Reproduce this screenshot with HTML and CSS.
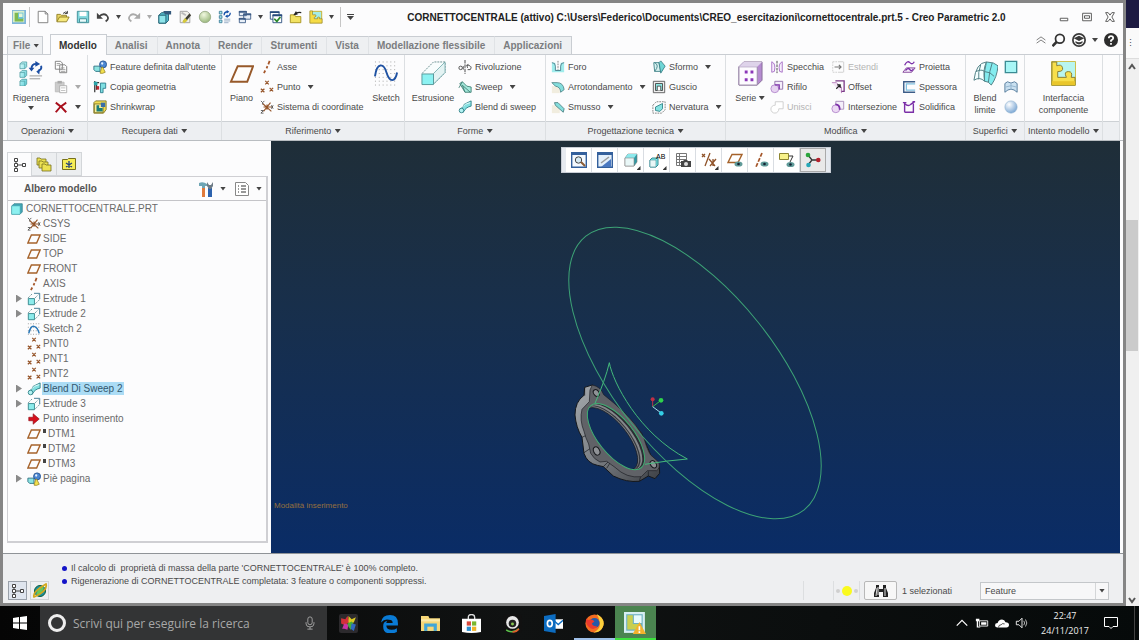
FILE: index.html
```html
<!DOCTYPE html>
<html lang="it">
<head>
  <meta charset="utf-8">
  <title>Creo Parametric 2.0</title>
  <link rel="stylesheet" href="styles.css">
</head>
<body>
  <!-- icon sprite -->
  <svg class="sprite" aria-hidden="true">
    <defs>
      <linearGradient id="cyan" x1="0" y1="0" x2="1" y2="1"><stop offset="0" stop-color="#d8fbfb"/><stop offset="1" stop-color="#62d3dc"/></linearGradient>
      <linearGradient id="metal" x1="0" y1="0" x2="1" y2="1"><stop offset="0" stop-color="#a4a8ac"/><stop offset=".5" stop-color="#7c8085"/><stop offset="1" stop-color="#3c3f44"/></linearGradient>
      <radialGradient id="ball" cx=".35" cy=".3" r=".8"><stop offset="0" stop-color="#fff"/><stop offset="1" stop-color="#6f9fd0"/></radialGradient>
      <radialGradient id="greenball" cx=".4" cy=".3" r=".8"><stop offset="0" stop-color="#f1f8e0"/><stop offset="1" stop-color="#8fb070"/></radialGradient>
    </defs>
    <symbol id="i-app" viewBox="0 0 16 16"><path d="M0 0h16v16H0z" fill="#7fb6d8"/><path d="M1 1h13v13H1z" fill="#d9efcc"/><path d="M3 3v10h10V9H8V3z" fill="#7fb94f"/><path d="M7 3h6v7H7z" fill="#6cc3dc"/><path d="M8 4h4v4H8z" fill="#e6f6d8"/></symbol>
    <symbol id="i-new" viewBox="0 0 16 16"><path d="M2.500 1.500h8l3 3v10h-11z" fill="#fff" stroke="#777"/><path d="M10.500 1.500v3h3" fill="none" stroke="#777"/></symbol>
    <symbol id="i-open" viewBox="0 0 16 16"><path d="M1 13V5h4l1 1h6v2" fill="#e9d568" stroke="#8d7a1e"/><path d="M1 13.500 4 8h11l-3 5.500z" fill="#f6e87c" stroke="#8d7a1e"/><path d="M8 4q3-3 5-1m0-2v3h-3" fill="none" stroke="#333"/></symbol>
    <symbol id="i-save" viewBox="0 0 16 16"><path d="M1.500 1.500h13v13h-13z" fill="#7fd6dc" stroke="#3b8a94"/><path d="M4 2h8v5H4z" fill="#fff"/><path d="M4 10h8v4H4z" fill="#e9fbfb" stroke="#3b8a94"/></symbol>
    <symbol id="i-undo" viewBox="0 0 16 16"><path d="M3 8q5-5 9-2 4 4-1 7" fill="none" stroke="#444" stroke-width="2"/><path d="M1 3v7h7z" fill="#444"/></symbol>
    <symbol id="i-redo" viewBox="0 0 16 16"><path d="M13 8q-5-5-9-2-4 4 1 7" fill="none" stroke="#aaa" stroke-width="2"/><path d="M15 3v7H8z" fill="#aaa"/></symbol>
    <symbol id="i-regen3d" viewBox="0 0 16 16"><path d="M1 6 4 3h8v9l-3 3H1z" fill="#51b4c6" stroke="#1f5e70"/><path d="M1 6h8v9H1z" fill="#8ee4ea" stroke="#1f5e70"/><path d="M6 1h9v4H8z" fill="#34597c"/></symbol>
    <symbol id="i-edit" viewBox="0 0 16 16"><path d="M2.500 1.500h8l3 3v10h-11z" fill="#f2f2ec" stroke="#999"/><path d="m4 3 5 3" stroke="#bbb" stroke-width="2"/><path d="m6 12 7-8 2 2-6 7z" fill="#3f3f33"/><path d="m5 13 3-4 3 3-4 3z" fill="#d5c93c"/></symbol>
    <symbol id="i-ball" viewBox="0 0 16 16"><circle cx="8" cy="8" r="6.500" fill="url(#greenball)" stroke="#9aab88"/></symbol>
    <symbol id="i-list-regen" viewBox="0 0 16 16"><path d="M1.500 1.500h3v3h-3zm0 5h3v3h-3zm0 5h3v3h-3z" fill="#a9e9ee" stroke="#3b7c98"/><path d="M7 10.500h7m-7 2h7m-7 2h5" stroke="#8fa7c0"/><path d="M7 6q0-4 4-4m3 1q0 4-4 4" fill="none" stroke="#1650a8" stroke-width="1.500"/><path d="m10 0 3 2-3 2zm1 5-3 2 3 2z" fill="#1650a8"/></symbol>
    <symbol id="i-windows" viewBox="0 0 16 16"><path d="M1.500 1.500h8v5h-8zM6.500 4.500h8v6h-8zM1.500 9.500h7v5h-7z" fill="#e9f0f8" stroke="#3d5c87"/><path d="M6 5h9M1 10h7M1 2h9" stroke="#3d5c87" stroke-width="2"/></symbol>
    <symbol id="i-check" viewBox="0 0 16 16"><path d="M1.500 2.500h10v8h-10z" fill="#fff" stroke="#264a7c"/><path d="M4.500 5.500h10v9h-10z" fill="#fff" stroke="#264a7c"/><path d="M1 2.500h11M4 6h11" stroke="#264a7c" stroke-width="2"/><path d="m6 10 3 3 4-5" fill="none" stroke="#2b8a2b" stroke-width="2"/></symbol>
    <symbol id="i-folder-up" viewBox="0 0 16 16"><path d="M1.500 5.500h5l1 2h6v7h-12z" fill="#f2e262" stroke="#a38f1c"/><path d="M7 5q2-3 7-2" fill="none" stroke="#222" stroke-width="1.500"/><path d="m8 1-3 5 5-1z" fill="#222"/></symbol>
    <symbol id="i-puzzle" viewBox="0 0 16 16"><path d="M1.500 1.500h13v13h-13z" fill="#a5ece6" stroke="#c8a818"/><path d="M1 1h3v4q0 1 1.500.500T8 6 6 8.500V10h4q-1-2 1-2t1 2h3v5H1z" fill="#f6dc45" stroke="#8b7a24" stroke-width=".7"/></symbol>
    <symbol id="i-regen" viewBox="0 0 26 26"><g fill="url(#cyan)" stroke="#4b9aa0" stroke-width=".8"><path d="M1 3 3 1h5v5l-2 2H1zM1 12l2-2h5v5l-2 2H1zM1 21l2-2h5v5l-2 2H1z"/></g><path d="M1 3h5v5M1 12h5v5M1 21h5v5" fill="none" stroke="#4b9aa0" stroke-width=".7"/><path d="M11 15.500h13m-13 3h11" stroke="#999"/><path d="M13 8q0-5 5-5m5 2q1 4-3 5" fill="none" stroke="#1c4ea3" stroke-width="2"/><path d="m17 0 5 3-5 3zm5 8-4 3 3 3zM10 7h6l-3 4z" fill="#1c4ea3"/></symbol>
    <symbol id="i-copy" viewBox="0 0 16 16"><path d="M1.500 1.500h6l2 2v7h-8zM6.500 5.500h6l2 2v7h-8z" fill="#fff" stroke="#777"/><path d="M3 4h4m-4 2h3m2 3h4m-4 2h5m-5 2h5" stroke="#999"/></symbol>
    <symbol id="i-paste" viewBox="0 0 16 16"><path d="M1.500 2.500h10v11h-10z" fill="#ccc" stroke="#bbb"/><path d="M4 1h5v3H4z" fill="#aaa"/><path d="M6.500 6.500h8v8h-8z" fill="#fff" stroke="#aaa"/><path d="M8 9h5m-5 3h5" stroke="#bbb"/></symbol>
    <symbol id="i-delete" viewBox="0 0 16 16"><path d="M2 3q6 4 12 11M14 3Q7 7 2 14" fill="none" stroke="#a80f1c" stroke-width="2.200"/></symbol>
    <symbol id="i-udf" viewBox="0 0 16 16"><path d="M1 7h7v6H3L1 11z" fill="#8ce4e2" stroke="#2a6e80"/><circle cx="11.500" cy="5" r="4" fill="#4b86d2" stroke="#22518f"/><circle cx="10.500" cy="4" r="1.300" fill="#e7f2ff"/><path d="M8 15 10 8h1l3 6q-3 2-6 1z" fill="#f3e04c" stroke="#8d7a1e" stroke-width=".8"/></symbol>
    <symbol id="i-copygeo" viewBox="0 0 16 16"><path d="M2 1v13M1 3h6M4 4v7" stroke="#333" stroke-width="1.400"/><path d="M1 2h4v4H1z" fill="#2aa3a8"/><path d="M4 7h3v4H4z" fill="#c2262e"/><path d="M8.500 3.500h6v6h-3v5h-3z" fill="#7fdfe2" stroke="#2a7c8d"/></symbol>
    <symbol id="i-shrink" viewBox="0 0 16 16"><path d="M1 3 3 1h12v10l-3 4H1z" fill="#f1dd52" stroke="#7f7326"/><path d="M1.500 4.500h10v10h-10z" fill="#f8ef9a" stroke="#7f7326"/><path d="M4 6h3v3h4v4H4z" fill="#1b7c78"/><path d="M9 3h5v5H9z" fill="#3a6ea8"/></symbol>
    <symbol id="i-plane" viewBox="0 0 16 16"><path d="M5 3.500h10L11 12.500H1z" fill="none" stroke="#a5622a" stroke-width="1.600"/></symbol>
    <symbol id="i-plane-lg" viewBox="0 0 26 26"><path d="M9 5.500h16l-6 16H2z" fill="#fffdfb" stroke="#97592a" stroke-width="2"/></symbol>
    <symbol id="i-axis" viewBox="0 0 16 16"><path d="M11 1 9.500 5M8.500 7l-1 2.500M6 12l-1.500 3" stroke="#a5562a" stroke-width="2"/></symbol>
    <symbol id="i-point" viewBox="0 0 16 16"><path d="m6 1 4 4m0-4L6 5M1 10l4 4m0-4-4 4M11 9l4 4m0-4-4 4" stroke="#96552a" stroke-width="1.400"/></symbol>
    <symbol id="i-csys" viewBox="0 0 16 16"><path d="m3 4 10 9M12 3 4 13M4 8h10M8 5v6" stroke="#96552a" stroke-width="1.300"/><path d="m1 1 2 2 2-2M3 3v2M1 12h3l-3 3h3M13 6l2 4m0-4-2 4" fill="none" stroke="#555"/></symbol>
    <symbol id="i-sketch" viewBox="0 0 26 26"><path d="M1 1h24M1 5h24M1 9h24M1 13h24M1 17h24M1 21h24M1 25h24" stroke="#a4a4a4" stroke-dasharray="1 3"/><path d="M1 16C3 1 10 2 13 12s9 11 11 0" fill="none" stroke="#1f52a3" stroke-width="2"/></symbol>
    <symbol id="i-sketch-sm" viewBox="0 0 16 16"><path d="M1 2h14M1 6h14M1 10h14M1 14h14" stroke="#888" stroke-dasharray="1 2"/><path d="M2 13Q4 4 8 5t6 8" fill="none" stroke="#2a78b8" stroke-width="1.700"/></symbol>
    <symbol id="i-extrude-lg" viewBox="0 0 26 26"><path d="m1 13 12-12h12v11L13 24" fill="#f8fdfd" stroke="#6a8f90" stroke-dasharray="2 1"/><path d="M13 13 25 1v11L13 24z" fill="#e4f3f3" stroke="#57989a" stroke-width=".7"/><path d="M1 13.500h12v11H1z" fill="#8cf2f2" stroke="#57989a"/></symbol>
    <symbol id="i-extrude" viewBox="0 0 16 16"><path d="M1.500 7.500h7v7h-7z" fill="#8cecec" stroke="#2f8288"/><path d="M1 7 6 2m3 5 4-4M9 14l6-6" stroke="#4f7f84" stroke-dasharray="1.500 1"/><path d="M8 1.500h6.500V8" fill="none" stroke="#2f6f88"/></symbol>
    <symbol id="i-revolve" viewBox="0 0 16 16"><path d="M8 0v16" stroke="#333" stroke-dasharray="4 1"/><circle cx="3" cy="9" r="2" fill="none" stroke="#444"/><path d="M10 6q5 0 5 3t-4 2M12 5l-2 1 1 3M6 7v4" fill="none" stroke="#444"/></symbol>
    <symbol id="i-sweep" viewBox="0 0 16 16"><path d="m2 4 3-2 5 5 5 1v6H8z" fill="#a4e9dc" stroke="#3f7f74"/><path d="M1 9 5 2m0 4 3 8M5 6l9 8" fill="none" stroke="#3f7f74"/></symbol>
    <symbol id="i-blend" viewBox="0 0 16 16"><path d="M3 10q3-1 4-5l8-4v6q-6 1-9 7z" fill="#84dfe0" stroke="#2b7f86"/><path d="M5 8q3-4 9-5" fill="none" stroke="#eaffff"/><circle cx="4" cy="12" r="2.600" fill="#b4f3f3" stroke="#2b7f86"/></symbol>
    <symbol id="i-hole" viewBox="0 0 16 16"><path d="M1 3h4v8h6V3h4v11H1z" fill="#a0ecec"/><path d="M1 3q4 0 4 4v5h6V7q0-4 4-4" fill="none" stroke="#467c88"/><path d="M8 1v10" stroke="#777" stroke-dasharray="2 1"/></symbol>
    <symbol id="i-round" viewBox="0 0 16 16"><path d="M1 7h9v8H1z" fill="#f1eddf"/><path d="M1 3h6q7 0 8 8l-4 3q0-6-6-7z" fill="#84dedd" stroke="#54898c"/></symbol>
    <symbol id="i-chamfer" viewBox="0 0 16 16"><path d="M1 6h9v9H1z" fill="#f1eddf"/><path d="M4 3h4l7 7-1 4-9-8z" fill="#84dedd" stroke="#4d8184"/></symbol>
    <symbol id="i-draft" viewBox="0 0 16 16"><path d="M2 3h6l2 10H3z" fill="#d8f2f0" stroke="#3b7f86"/><path d="m8 3 2-2 5 6-5 8z" fill="#6fd6d6" stroke="#3b7f86"/><path d="M3 3q6 3 0 10" fill="none" stroke="#3b7f86"/></symbol>
    <symbol id="i-shell" viewBox="0 0 16 16"><path d="M1.500 1.500h13v13h-13z" fill="#eee" stroke="#555"/><path d="M4 4h8v8H4z" fill="#8ee7e3" stroke="#444"/><path d="M6 12V7h4v5" fill="#fff" stroke="#444"/></symbol>
    <symbol id="i-rib" viewBox="0 0 16 16"><path d="m1 6 4-4h10v9l-4 4H1z" fill="none" stroke="#777" stroke-dasharray="2 1"/><path d="M4 12V8l8-4v6l-3 3z" fill="#86e2e2" stroke="#2f8288"/></symbol>
    <symbol id="i-pattern" viewBox="0 0 26 26"><path d="m1 6 5-5h19v19l-5 5H1z" fill="#b58bd0" stroke="#866d98"/><path d="M1 6h19v19H1z" fill="#fdfbff" stroke="#9a88a8"/><path d="m1 6 5-5h19l-5 5z" fill="#ded3ea"/><path d="M7 10h3v3H7zm6 0h3v3h-3zm-6 8h3v3H7zm6 0h3v3h-3z" fill="#8b36b8"/></symbol>
    <symbol id="i-mirror" viewBox="0 0 16 16"><path d="M8 1v14" stroke="#333" stroke-dasharray="3 1"/><path d="M2 2q5 2 3 11l-3 1zM14 2q-5 2-3 11l3 1z" fill="#f6effb" stroke="#a268c4"/></symbol>
    <symbol id="i-trim" viewBox="0 0 16 16"><path d="M5.500 1.500h9v9h-9z" fill="#f4eefa" stroke="#8d6ba6"/><circle cx="5.500" cy="10" r="4.500" fill="#e6d2f1" stroke="#b287cc"/><path d="M5.500 5.500h5v5" fill="none" stroke="#7b2fa8" stroke-width="1.500"/></symbol>
    <symbol id="i-merge" viewBox="0 0 16 16"><path d="M6 6V2h9v8h-5a4.500 4.500 0 1 1-4-4z" fill="#fff" stroke="#ccc"/></symbol>
    <symbol id="i-extend" viewBox="0 0 16 16"><path d="M2 2h6M2 2v12h6" fill="none" stroke="#ccc" stroke-dasharray="2 1"/><path d="M14.500 2v12M8 2h6M8 14h6" stroke="#ccc"/><path d="M4 8h7M9 5.500 11.500 8 9 10.500" fill="none" stroke="#777" stroke-width="1.300"/></symbol>
    <symbol id="i-offset" viewBox="0 0 16 16"><path d="M1 3h5l6 5v7" fill="#f3e5f5" stroke="#b97fbd"/><path d="M5 1h10v12h-3" fill="none" stroke="#7c3a88" stroke-width="1.500"/><path d="m6 10 4-4M7 5.500h3.500V9" fill="none" stroke="#222" stroke-width="1.300"/></symbol>
    <symbol id="i-intersect" viewBox="0 0 16 16"><path d="M5.500 1.500h9v9h-9z" fill="#f4eefa" stroke="#a58cb8"/><circle cx="5.500" cy="10" r="4.500" fill="#ecd9f4" stroke="#b287cc"/><path d="M5 5q5 0 5 6" fill="none" stroke="#7b2fa8" stroke-width="2"/></symbol>
    <symbol id="i-project" viewBox="0 0 16 16"><path d="m1 14 4-5h10l-4 5z" fill="#f7edfb" stroke="#7c3a94"/><path d="M3 6q3-6 6-3t5-1M4 12q3-4 5-1t4-1" fill="none" stroke="#7b2fa8" stroke-width="1.500"/></symbol>
    <symbol id="i-thicken" viewBox="0 0 16 16"><path d="M15 2H2v12h13" fill="none" stroke="#3b5c88" stroke-width="1.600"/><path d="M15 4.500H5v7h10" fill="none" stroke="#7fc0e0" stroke-width="1.400"/></symbol>
    <symbol id="i-solidify" viewBox="0 0 16 16"><path d="M3 14V4q4 4 7 1l4-3M3 14h10V4" fill="none" stroke="#7b2fa8" stroke-width="1.600"/><path d="M1 3h4m7-1h3" stroke="#7b2fa8" stroke-width="1.500"/></symbol>
    <symbol id="i-boundary" viewBox="0 0 26 26"><path d="M1 20Q3 2 14 1q-4 8-2 20-5-5-11-1z" fill="#f4ffff" stroke="#4f7f84"/><path d="M14 1q8 0 12 4-1 12-7 20-3-4-7-4-1-10 2-20z" fill="#84ecef" stroke="#4f7f84"/><path d="M3 11q6-3 9 0 6 0 10 5M20 2q-3 8-4 20M8 4q-3 8-2 15" fill="none" stroke="#4f7f84"/></symbol>
    <symbol id="i-fill" viewBox="0 0 16 16"><path d="M1.500 1.500h13v13h-13z" fill="#a8f6f6" stroke="#3b8b94" stroke-width="1.500"/></symbol>
    <symbol id="i-style" viewBox="0 0 16 16"><path d="M1 14V4l3-2q4 3 8 0l3 2v10q-7-7-14 0z" fill="#c9e0f0" stroke="#4b7396"/><path d="M2 8q6-3 12 0M8 3v8" fill="none" stroke="#8eb0cc"/></symbol>
    <symbol id="i-sphere" viewBox="0 0 16 16"><circle cx="8" cy="8" r="7" fill="url(#ball)" stroke="#8eb0d0" stroke-width=".7"/></symbol>
    <symbol id="i-puzzle-lg" viewBox="0 0 26 26"><path d="M.5.500h25v25H.500z" fill="#b8f5ef" stroke="#cdbb45"/><path d="M1 1h5v4q5-2 6 2t-5 4v6h9q-3-6 2-6t3 6h4v8H1z" fill="#f7df4c" stroke="#857c35"/><path d="M1 21h24v4H1z" fill="#e9c62b"/></symbol>
    <symbol id="i-tree" viewBox="0 0 16 16"><path d="M2.500 1.500h3v3h-3zM2.500 6.500h3v3h-3zM2.500 11.500h3v3h-3zM10.500 6.500h3v3h-3z" fill="#fff" stroke="#444"/><path d="M4 4.500v2m0 3v2M5.500 8h5" stroke="#444"/></symbol>
    <symbol id="i-folders" viewBox="0 0 16 16"><g fill="#ece152" stroke="#77701e" stroke-width=".8"><path d="M1 2h3l1 1h5v6H1z"/><path d="M3 5h3l1 1h5v6H3z"/><path d="M6 8h3l1 1h5v6H6z"/></g></symbol>
    <symbol id="i-favorites" viewBox="0 0 16 16"><path d="M1.500 3.500h5l1-1h7v11h-13z" fill="#f5ed55" stroke="#77701e"/><path d="M8 5v7M5 7l6 4m0-4-6 4" stroke="#26427c" stroke-width="1.300"/></symbol>
    <symbol id="i-tools" viewBox="0 0 16 16"><path d="M1 2q4-2 8 1v2H7v3H4V5L1 5z" fill="#6fa6b5"/><path d="M4 7h3v9H4z" fill="#e07a3b"/><path d="M10 7h4v9h-4z" fill="#2d62ad"/><path d="M9 1v4l2 3h2l2-3V1l-2 3h-2z" fill="#6d7b86"/></symbol>
    <symbol id="i-settings" viewBox="0 0 16 16"><path d="M1.500 1.500h10l3 3v10h-13z" fill="#fff" stroke="#888"/><path d="M4 5h1m2 0h5M4 8h1m2 0h5m-8 3h1m2 0h5" stroke="#777" stroke-width="1.300"/></symbol>
    <symbol id="i-part" viewBox="0 0 16 16"><path d="m1 4 3-3h11v11l-3 3H1z" fill="#45a9b8" stroke="#2f7f8c"/><path d="M1 4h11v11H1z" fill="#8cf0f0" stroke="#4fb0b8" stroke-width=".6"/></symbol>
    <symbol id="i-shaded" viewBox="0 0 16 16"><path d="m2 6 3-4h9v8l-3 4H2z" fill="#2f9aa4" stroke="#777" stroke-width=".6"/><path d="m2 6 3-4h9l-3 4z" fill="#8ee9ec"/><path d="M2 6h9v8H2z" fill="#e9f7f7" stroke="#888" stroke-width=".6"/></symbol>
    <symbol id="i-insert" viewBox="0 0 16 16"><path d="M2 6h5V2l7 6-7 6v-4H2z" fill="#d6101c" stroke="#8a0b14" stroke-width=".7"/></symbol>
    <symbol id="i-refit" viewBox="0 0 16 16"><path d="M.7.700h14.600v14.600H.700z" fill="#f5faff" stroke="#34609c" stroke-width="1.400"/><path d="M0 2h16" stroke="#34609c" stroke-width="2"/><circle cx="7.500" cy="8" r="3.200" fill="#d9ecf5" stroke="#444"/><path d="m10 10 4 4" stroke="#8d5c34" stroke-width="2"/></symbol>
    <symbol id="i-repaint" viewBox="0 0 16 16"><path d="M.7.700h14.600v14.600H.700z" fill="#e3effb" stroke="#34609c" stroke-width="1.400"/><path d="M0 2h16" stroke="#34609c" stroke-width="2"/><path d="M14 15H4l10-8z" fill="#4a78c0"/><path d="m4 11 8-6" stroke="#9a9a9a" stroke-width="1.500"/></symbol>
    <symbol id="i-camera" viewBox="0 0 16 16"><path d="M1.500 1.500h10v12h-10zM1 4.500h10M1 7.500h10M1 10.500h10M4.500 2v12" fill="#fff" stroke="#777"/><path d="M6 9h2l1-1h3l1 1h3v6H6z" fill="#444"/><circle cx="11" cy="12" r="2" fill="#ddd"/></symbol>
    <symbol id="i-datum" viewBox="0 0 16 16"><path d="M9 1 4 14M1 2l3 3m0-3L1 5M8 7l6 7m1-7-6 7M12 7v7" stroke="#8f5228" stroke-width="1.300"/></symbol>
    <symbol id="i-plane-eye" viewBox="0 0 16 16"><path d="M5 2.500h10l-4 8H1z" fill="none" stroke="#a5622a" stroke-width="1.400"/><ellipse cx="11.500" cy="12" rx="4" ry="2.600" fill="#5f9a98"/><circle cx="11.500" cy="12" r="1.300" fill="#123"/></symbol>
    <symbol id="i-axis-eye" viewBox="0 0 16 16"><path d="M9 1 3 15" stroke="#a5562a" stroke-width="1.700" stroke-dasharray="4 1.500"/><ellipse cx="11.500" cy="12" rx="4" ry="2.600" fill="#5f9a98"/><circle cx="11.500" cy="12" r="1.300" fill="#123"/></symbol>
    <symbol id="i-note-eye" viewBox="0 0 16 16"><path d="M.5 1.500h9v6h-9z" fill="#f8f28a" stroke="#8d8530"/><path d="M10 4h4l-3 6" fill="none" stroke="#333"/><ellipse cx="11.500" cy="12.500" rx="4" ry="2.600" fill="#5f9a98"/><circle cx="11.500" cy="12.500" r="1.300" fill="#123"/></symbol>
    <symbol id="i-spin" viewBox="0 0 16 16"><path d="m3 3 4 5-4 5m4-5h6" fill="none" stroke="#333" stroke-width="1.300"/><circle cx="3" cy="3" r="2.300" fill="#2ba53d"/><circle cx="13.300" cy="8" r="2.300" fill="#b3202c"/><circle cx="3.500" cy="13" r="2.300" fill="#27a8b8"/></symbol>
    <symbol id="i-up" viewBox="0 0 16 16"><path d="m1 8 7-5 7 5M1 13l7-5 7 5" fill="none" stroke="#777" stroke-width="1.500"/></symbol>
    <symbol id="i-search" viewBox="0 0 16 16"><circle cx="9" cy="6.500" r="5" fill="none" stroke="#333" stroke-width="2"/><path d="m5.500 10-5 5" stroke="#333" stroke-width="3"/></symbol>
    <symbol id="i-learn" viewBox="0 0 16 16"><circle cx="8" cy="8" r="7" fill="#fff" stroke="#3a3a3a" stroke-width="2"/><path d="m2 6 6-3 6 3-6 3zM4 9q4 3 8 0v2q-4 4-8 0z" fill="#3a3a3a"/></symbol>
    <symbol id="i-help" viewBox="0 0 16 16"><circle cx="8" cy="8" r="8" fill="#2d2d2d"/><path d="M5.500 6q0-2.500 2.500-2.500T10.500 6Q10.500 7 8 8.500V10M8 11.300v2" fill="none" stroke="#fff" stroke-width="2"/></symbol>
    <symbol id="i-min" viewBox="0 0 16 16"><path d="M2 10h12v4H2z" fill="#fff" stroke="#555" stroke-width="1.500"/></symbol>
    <symbol id="i-max" viewBox="0 0 16 16"><path d="M1 2h14v12H1zM4 6h8v4H4z" fill="#fff" stroke="#555" stroke-width="1.500"/></symbol>
    <symbol id="i-close" viewBox="0 0 16 16"><path d="M1 1h4l3 4 3-4h4l-4 7 4 7h-4l-3-4-3 4H1l4-7z" fill="#fff" stroke="#555" stroke-width="1.500"/></symbol>
    <symbol id="i-browser" viewBox="0 0 16 16"><circle cx="8" cy="8" r="5.500" fill="#1d8f9e" stroke="#0c5d3d"/><path d="M4 13q1-8 8-10-1 8-8 10z" fill="#68c65a"/><path d="M2 14Q0 9 14 1q2 7-12 13z" fill="none" stroke="#d3a71c" stroke-width="1.700"/></symbol>
    <symbol id="i-find" viewBox="0 0 16 16"><path d="M3 5V2h3v4h4V2h3v3l2 5v4h-5V9H6v5H1v-4z" fill="#222"/><path d="M4 5 3 13m9-8v8M5 4v8" stroke="#ddd"/></symbol>
    <symbol id="i-win" viewBox="0 0 16 16"><path d="m1 3 6-1v5.500H1zm7-1 7-1v6.500H8zM1 8.500h6V14l-6-1zm7 0h7V15l-7-1z" fill="#fff"/></symbol>
    <symbol id="i-mic" viewBox="0 0 16 16"><rect x="5.500" y="1" width="5" height="9" rx="2.500" fill="none" stroke="#aaa"/><path d="M3.500 7v2q0 3.500 4.500 3.500T12.500 9V7M8 12.500V15M5 15h6" fill="none" stroke="#aaa"/></symbol>
    <symbol id="i-splash" viewBox="0 0 18 18"><rect width="18" height="18" rx="2" fill="#2c2a2d"/><path d="m2 4 4 1 2-3 2 5-4 4-4-2z" fill="#d3303a"/><path d="m9 2 3 3 4-2-2 5-5 1z" fill="#d9c722"/><path d="m3 14 2-5 4 1-1 5-3-1z" fill="#c934a5"/><path d="m8 9 4-2 3 4-4 4-2-3z" fill="#46ad3a"/><path d="m12 9 4 1-2 6-3-2z" fill="#3267c0"/></symbol>
    <symbol id="i-edge" viewBox="0 0 18 18"><path d="M1 8Q2 1 9.500 1 17 1 17 9v2H6q0 4 5 4 3 0 5-1.500v3.500q-3 1.500-6 1.500-7 0-7-7 0-4 4-5-1 1-1 2h6q0-3-3.500-3Q4 4.500 1 8z" fill="#0a7bd6"/></symbol>
    <symbol id="i-explorer" viewBox="0 0 18 18"><path d="M0 2h7l1 2h10v12H0z" fill="#f7d778"/><path d="M3 9h12v7H3z" fill="#41a6d8"/><path d="M6 16v-4h6v4z" fill="#f7d778"/><path d="M0 5h18v2H0z" fill="#fbe9a8"/></symbol>
    <symbol id="i-store" viewBox="0 0 18 18"><path d="M6 5V3q0-2.500 3-2.500T12 3v2" fill="none" stroke="#ddd" stroke-width="1.300"/><path d="M0 4.500h18V17q-9 2-18 0z" fill="#fff"/><path d="M4.500 7h4v4h-4z" fill="#d8493c"/><path d="M9.500 7h4v4h-4z" fill="#7ab62d"/><path d="M4.500 12h4v4h-4z" fill="#2a8fd0"/><path d="M9.500 12h4v4h-4z" fill="#f0b429"/></symbol>
    <symbol id="i-webcam" viewBox="0 0 18 18"><rect width="18" height="18" rx="3" fill="#111"/><path d="M3 15q6 4 12-1" fill="none" stroke="#5ac24a" stroke-width="1.500"/><path d="M9 17q4 0 6-3" fill="none" stroke="#e05a2a" stroke-width="1.500"/><circle cx="9" cy="8" r="6" fill="#e8e8e8"/><circle cx="9" cy="9" r="3.600" fill="#222"/><circle cx="9" cy="9.500" r="1.400" fill="#84c44f"/></symbol>
    <symbol id="i-outlook" viewBox="0 0 18 18"><path d="M9 5h9v9H9z" fill="#fff"/><path d="m9 6 4.500 4L18 6" fill="none" stroke="#0c6cc0" stroke-width="1.300"/><path d="m0 2 11-2v18L0 16z" fill="#0c6cc0"/><ellipse cx="5.500" cy="9" rx="2.300" ry="3" fill="none" stroke="#fff" stroke-width="1.600"/></symbol>
    <symbol id="i-firefox" viewBox="0 0 18 18"><circle cx="9" cy="9" r="8.600" fill="#f36c21"/><path d="M11 0q8 4 6.500 11Q15 18 8 17.600 15 14 14 8 13 3 11 0z" fill="#fbd03c"/><circle cx="9" cy="8.500" r="4.800" fill="#2559a8"/><path d="M1 4q1 2 3 1.500 3-1 5 1.500L6.500 9q1 3 5 2.500-2 4-6.500 2Q0 10 1 4z" fill="#ea3a2e"/></symbol>
    <symbol id="i-creo" viewBox="0 0 20 20"><path d="M0 0h19v19H0z" fill="#d7eef2"/><path d="M2 2h15v15H2z" fill="#6db0c0"/><path d="M3 3v13h12v-5H8V3z" fill="#c9cf50"/><path d="M9 3h7v7H9z" fill="#e8fafc"/><path d="m14 9 6 11H8z" fill="#f3b22c"/><path d="M14 13v3.500m0 1v1.500" stroke="#fff" stroke-width="1.500"/></symbol>
    <symbol id="i-tray-up" viewBox="0 0 16 16"><path d="m2 11 6-6 6 6" fill="none" stroke="#fff" stroke-width="1.400"/></symbol>
    <symbol id="i-battery" viewBox="0 0 16 16"><path d="M5 5.500h9.500v6H5z" fill="none" stroke="#fff"/><path d="M7 7h6v3H7zM1 3h4v3H1zm1 3h1.500v6H6v1H2z" fill="#fff"/></symbol>
    <symbol id="i-cloud" viewBox="0 0 16 16"><path d="M3 13q-3 0-3-2.500T3 8q1-4 5-4 3 0 4 3 4 0 4 3t-3 3z" fill="#fff"/><path d="M4 13q0-3 3-3 1-2 4-1" fill="none" stroke="#111" stroke-width=".8"/></symbol>
    <symbol id="i-volume" viewBox="0 0 16 16"><path d="M1.500 6h3L8 2.500v11L4.500 10h-3z" fill="none" stroke="#fff"/><path d="M10 5.500q2 2.500 0 5M12 4q3 4 0 8" fill="none" stroke="#ccc"/></symbol>
    <symbol id="i-action" viewBox="0 0 16 16"><path d="M1.500 2.500h13v9H10l-2 2-2-2H1.500z" fill="none" stroke="#fff"/></symbol>
  </svg>

  <div class="desktop">
    <main class="window">
      <header class="titlebar">
        <div class="quick-access">
          <svg class="icon app-icon"><use href="#i-app"/></svg>
          <span class="separator"></span>
          <button title="Nuovo"><svg class="icon"><use href="#i-new"/></svg></button>
          <button title="Apri"><svg class="icon"><use href="#i-open"/></svg></button>
          <button title="Salva"><svg class="icon"><use href="#i-save"/></svg></button>
          <button title="Annulla"><svg class="icon"><use href="#i-undo"/></svg></button>
          <i class="caret"></i>
          <button title="Ripeti"><svg class="icon"><use href="#i-redo"/></svg></button>
          <i class="caret muted"></i>
          <button title="Rigenera"><svg class="icon"><use href="#i-regen3d"/></svg></button>
          <button title="Modifica"><svg class="icon"><use href="#i-edit"/></svg></button>
          <button title="Aspetto"><svg class="icon"><use href="#i-ball"/></svg></button>
          <button title="Rigenera tutto"><svg class="icon"><use href="#i-list-regen"/></svg></button>
          <button title="Finestre"><svg class="icon"><use href="#i-windows"/></svg></button>
          <i class="caret"></i>
          <button title="Chiudi"><svg class="icon"><use href="#i-check"/></svg></button>
          <button title="Directory"><svg class="icon"><use href="#i-folder-up"/></svg></button>
          <button title="Interfaccia"><svg class="icon"><use href="#i-puzzle"/></svg></button>
          <i class="caret"></i>
          <span class="separator"></span>
          <i class="caret barred"></i>
        </div>
        <h1>CORNETTOCENTRALE (attivo) C:\Users\Federico\Documents\CREO_esercitazioni\cornettocentrale.prt.5 - Creo Parametric 2.0</h1>
        <div class="window-controls">
          <button title="Riduci"><svg class="icon-xs"><use href="#i-min"/></svg></button>
          <button title="Ingrandisci"><svg class="icon-xs"><use href="#i-max"/></svg></button>
          <button title="Chiudi"><svg class="icon-xs"><use href="#i-close"/></svg></button>
        </div>
      </header>

      <nav class="tabs">
        <button class="tab file">File <i class="caret"></i></button>
        <button class="tab active">Modello</button>
        <button class="tab">Analisi</button>
        <button class="tab">Annota</button>
        <button class="tab">Render</button>
        <button class="tab">Strumenti</button>
        <button class="tab">Vista</button>
        <button class="tab">Modellazione flessibile</button>
        <button class="tab last">Applicazioni</button>
        <div class="help-tools">
          <button title="Riduci barra"><svg class="icon-xs"><use href="#i-up"/></svg></button>
          <button title="Cerca"><svg class="icon"><use href="#i-search"/></svg></button>
          <button title="Risorse"><svg class="icon"><use href="#i-learn"/></svg></button>
          <i class="caret"></i>
          <button title="Guida"><svg class="icon"><use href="#i-help"/></svg></button>
        </div>
      </nav>

      <div class="ribbon">
        <section class="group">
          <div class="tools ops">
            <button class="big"><svg><use href="#i-regen"/></svg>Rigenera<i class="caret"></i></button>
            <div class="stack">
              <button class="small" title="Copia"><svg class="icon"><use href="#i-copy"/></svg></button>
              <button class="small" title="Incolla"><svg class="icon"><use href="#i-paste"/></svg><i class="caret muted"></i></button>
              <button class="small" title="Elimina"><svg class="icon"><use href="#i-delete"/></svg><i class="caret"></i></button>
            </div>
          </div>
          <button class="group-label">Operazioni <i class="caret"></i></button>
        </section>
        <section class="group">
          <div class="tools">
            <div class="stack">
              <button class="small"><svg class="icon"><use href="#i-udf"/></svg>Feature definita dall'utente</button>
              <button class="small"><svg class="icon"><use href="#i-copygeo"/></svg>Copia geometria</button>
              <button class="small"><svg class="icon"><use href="#i-shrink"/></svg>Shrinkwrap</button>
            </div>
          </div>
          <button class="group-label">Recupera dati <i class="caret"></i></button>
        </section>
        <section class="group">
          <div class="tools datum">
            <button class="big"><svg><use href="#i-plane-lg"/></svg>Piano</button>
            <div class="stack">
              <button class="small"><svg class="icon"><use href="#i-axis"/></svg>Asse</button>
              <button class="small"><svg class="icon"><use href="#i-point"/></svg>Punto <i class="caret"></i></button>
              <button class="small"><svg class="icon"><use href="#i-csys"/></svg>Sistema di coordinate</button>
            </div>
            <button class="big"><svg><use href="#i-sketch"/></svg>Sketch</button>
          </div>
          <button class="group-label">Riferimento <i class="caret"></i></button>
        </section>
        <section class="group">
          <div class="tools shapes">
            <button class="big"><svg><use href="#i-extrude-lg"/></svg>Estrusione</button>
            <div class="stack">
              <button class="small"><svg class="icon"><use href="#i-revolve"/></svg>Rivoluzione</button>
              <button class="small"><svg class="icon"><use href="#i-sweep"/></svg>Sweep <i class="caret"></i></button>
              <button class="small"><svg class="icon"><use href="#i-blend"/></svg>Blend di sweep</button>
            </div>
          </div>
          <button class="group-label">Forme <i class="caret"></i></button>
        </section>
        <section class="group">
          <div class="tools engineering">
            <div class="stack">
              <button class="small"><svg class="icon"><use href="#i-hole"/></svg>Foro</button>
              <button class="small"><svg class="icon"><use href="#i-round"/></svg>Arrotondamento <i class="caret"></i></button>
              <button class="small"><svg class="icon"><use href="#i-chamfer"/></svg>Smusso <i class="caret"></i></button>
            </div>
            <div class="stack">
              <button class="small"><svg class="icon"><use href="#i-draft"/></svg>Sformo <i class="caret"></i></button>
              <button class="small"><svg class="icon"><use href="#i-shell"/></svg>Guscio</button>
              <button class="small"><svg class="icon"><use href="#i-rib"/></svg>Nervatura <i class="caret"></i></button>
            </div>
          </div>
          <button class="group-label">Progettazione tecnica <i class="caret"></i></button>
        </section>
        <section class="group">
          <div class="tools editing">
            <button class="big"><svg><use href="#i-pattern"/></svg><span>Serie <i class="caret"></i></span></button>
            <div class="stack">
              <button class="small"><svg class="icon"><use href="#i-mirror"/></svg>Specchia</button>
              <button class="small"><svg class="icon"><use href="#i-trim"/></svg>Rifilo</button>
              <button class="small" disabled><svg class="icon"><use href="#i-merge"/></svg>Unisci</button>
            </div>
            <div class="stack">
              <button class="small" disabled><svg class="icon"><use href="#i-extend"/></svg>Estendi</button>
              <button class="small"><svg class="icon"><use href="#i-offset"/></svg>Offset</button>
              <button class="small"><svg class="icon"><use href="#i-intersect"/></svg>Intersezione</button>
            </div>
            <div class="stack">
              <button class="small"><svg class="icon"><use href="#i-project"/></svg>Proietta</button>
              <button class="small"><svg class="icon"><use href="#i-thicken"/></svg>Spessora</button>
              <button class="small"><svg class="icon"><use href="#i-solidify"/></svg>Solidifica</button>
            </div>
          </div>
          <button class="group-label">Modifica <i class="caret"></i></button>
        </section>
        <section class="group">
          <div class="tools surfaces">
            <button class="big"><svg><use href="#i-boundary"/></svg>Blend<br>limite</button>
            <div class="stack">
              <button class="small" title="Riempi"><svg class="icon"><use href="#i-fill"/></svg></button>
              <button class="small" title="Stile"><svg class="icon"><use href="#i-style"/></svg></button>
              <button class="small" title="Forma libera"><svg class="icon"><use href="#i-sphere"/></svg></button>
            </div>
          </div>
          <button class="group-label">Superfici <i class="caret"></i></button>
        </section>
        <section class="group">
          <div class="tools intent">
            <button class="big"><svg><use href="#i-puzzle-lg"/></svg>Interfaccia<br>componente</button>
          </div>
          <button class="group-label">Intento modello <i class="caret"></i></button>
        </section>
        <section class="group">
          <div class="tools"></div>
          <div class="group-label"></div>
        </section>
      </div>

      <div class="workspace">
        <aside class="navigator">
          <div class="nav-tabs">
            <button class="active" title="Albero modello"><svg class="icon-md"><use href="#i-tree"/></svg></button>
            <button title="Cartelle"><svg class="icon-md"><use href="#i-folders"/></svg></button>
            <button title="Preferiti"><svg class="icon-md"><use href="#i-favorites"/></svg></button>
          </div>
          <div class="nav-panel">
            <div class="nav-header">
              <h2>Albero modello</h2>
              <button title="Strumenti"><svg class="icon-md"><use href="#i-tools"/></svg><i class="caret"></i></button>
              <button title="Impostazioni"><svg class="icon-md"><use href="#i-settings"/></svg><i class="caret"></i></button>
            </div>
            <ul class="tree">
              <li class="root"><svg class="icon-sm"><use href="#i-part"/></svg><span>CORNETTOCENTRALE.PRT</span></li>
              <li><svg class="icon"><use href="#i-csys"/></svg><span>CSYS</span></li>
              <li><svg class="icon"><use href="#i-plane"/></svg><span>SIDE</span></li>
              <li><svg class="icon"><use href="#i-plane"/></svg><span>TOP</span></li>
              <li><svg class="icon"><use href="#i-plane"/></svg><span>FRONT</span></li>
              <li><svg class="icon"><use href="#i-axis"/></svg><span>AXIS</span></li>
              <li class="branch"><svg class="icon"><use href="#i-extrude"/></svg><span>Extrude 1</span></li>
              <li class="branch"><svg class="icon"><use href="#i-extrude"/></svg><span>Extrude 2</span></li>
              <li><svg class="icon"><use href="#i-sketch-sm"/></svg><span>Sketch 2</span></li>
              <li><svg class="icon"><use href="#i-point"/></svg><span>PNT0</span></li>
              <li><svg class="icon"><use href="#i-point"/></svg><span>PNT1</span></li>
              <li><svg class="icon"><use href="#i-point"/></svg><span>PNT2</span></li>
              <li class="branch selected"><svg class="icon"><use href="#i-blend"/></svg><span>Blend Di Sweep 2</span></li>
              <li class="branch"><svg class="icon"><use href="#i-extrude"/></svg><span>Extrude 3</span></li>
              <li><svg class="icon"><use href="#i-insert"/></svg><span>Punto inserimento</span></li>
              <li class="suppressed"><svg class="icon"><use href="#i-plane"/></svg><span>DTM1</span></li>
              <li class="suppressed"><svg class="icon"><use href="#i-plane"/></svg><span>DTM2</span></li>
              <li class="suppressed"><svg class="icon"><use href="#i-plane"/></svg><span>DTM3</span></li>
              <li class="branch"><svg class="icon"><use href="#i-udf"/></svg><span>Piè pagina</span></li>
            </ul>
          </div>
        </aside>

        <section class="viewport">
          <svg class="model" viewBox="271 141 849 412">
            <g transform="translate(560 350) scale(.3333)" stroke-linejoin="round">
              <!-- flange side wall -->
              <path d="M97 105 74 112 72 136Q45 155 45 195 48 232 66 262L72 310Q82 340 112 346L130 350 160 378Q200 398 238 394L265 378 285 386 299 370 298 344 272 315 245 250 190 185 133 140z" fill="url(#metal)" stroke="#15181c" stroke-width="3"/>
              <path d="M74 112v25M66 262l13-6M72 308l18-12M130 350l14-14M140 355l10-16M265 378v-14M238 394l4-15" stroke="#15181c" stroke-width="2"/>
              <!-- flange face -->
              <path d="M97 105Q122 110 131 134 162 158 190 185 232 225 252 265 262 300 272 315L296 336Q302 354 290 362L262 362 244 380Q200 386 165 352L140 334 120 336Q102 328 92 310L86 282Q76 262 72 244 58 210 66 178L88 155 90 120z" fill="#606267" stroke="#1b1d22" stroke-width="2"/>
              <g transform="translate(168 260) rotate(51)">
                <clipPath id="bore"><ellipse rx="120" ry="53"/></clipPath>
                <ellipse rx="120" ry="53" fill="#2b2e33"/>
                <g clip-path="url(#bore)">
                  <ellipse cx="-3" cy="5" rx="119" ry="51" fill="#85888c"/>
                  <ellipse cx="-4" cy="10" rx="118" ry="50" fill="#33363b"/>
                  <ellipse cx="-5" cy="13" rx="116" ry="50" fill="#777a7f"/>
                  <ellipse cx="-5" cy="17" rx="114" ry="50" fill="#102d59" stroke="#15181c" stroke-width="2"/>
                </g>
                <ellipse rx="120" ry="53" fill="none" stroke="#3fae72" stroke-width="3"/>
              </g>
              <g fill="#8f9296" stroke="#17191d" stroke-width="3">
                <ellipse cx="109" cy="129" rx="8" ry="11" transform="rotate(-35 109 129)"/>
                <ellipse cx="110" cy="303" rx="9" ry="13" transform="rotate(-25 110 303)"/>
                <ellipse cx="280" cy="343" rx="8" ry="12" transform="rotate(-35 280 343)"/>
              </g>
              <path d="M148 38Q136 90 105 160M148 38C158 95 235 250 382 327Q320 332 255 343" fill="none" stroke="#43ba7b" stroke-width="3"/>
              <!-- spin center -->
              <path d="M278 148v22" stroke="#b8344c" stroke-width="3"/>
              <path d="m278 170 24-18" stroke="#37b84a" stroke-width="3"/>
              <path d="m278 170 24 18" stroke="#a8e0ee" stroke-width="3"/>
              <circle cx="278" cy="148" r="6" fill="#c02f45"/>
              <circle cx="303" cy="151" r="7" fill="#2fd24c"/>
              <circle cx="304" cy="190" r="7" fill="#34cfe6"/>
            </g>
            <ellipse rx="175" ry="81" transform="translate(695 373) rotate(51.400)" fill="none" stroke="#3da376"/>
          </svg>
          <div class="view-toolbar">
            <button title="Adatta"><svg class="icon-md"><use href="#i-refit"/></svg></button>
            <button title="Ridisegna"><svg class="icon-md"><use href="#i-repaint"/></svg></button>
            <button class="more" title="Stile"><svg class="icon-md"><use href="#i-shaded"/></svg></button>
            <button class="more" title="Orientamenti"><svg class="icon-md" viewBox="0 0 16 16"><path d="m1 8 2-2h6v7l-2 2H1z" fill="#7ee9e9" stroke="#3b8b94"/><path d="M1 8h6v7H1z" fill="#e9f7f7" stroke="#3b8b94" stroke-width=".6"/><text x="7" y="7" font-size="7">AB</text></svg></button>
            <button title="Gestione viste"><svg class="icon-md"><use href="#i-camera"/></svg></button>
            <button class="more" title="Riferimenti"><svg class="icon-md"><use href="#i-datum"/></svg></button>
            <button title="Piani"><svg class="icon-md"><use href="#i-plane-eye"/></svg></button>
            <button title="Assi"><svg class="icon-md"><use href="#i-axis-eye"/></svg></button>
            <button title="Annotazioni"><svg class="icon-md"><use href="#i-note-eye"/></svg></button>
            <button class="pressed" title="Centro rotazione"><svg class="icon-md"><use href="#i-spin"/></svg></button>
          </div>
          <p class="mode">Modalità inserimento</p>
        </section>
      </div>

      <footer class="statusbar">
        <div class="status-buttons">
          <button class="pressed" title="Navigatore"><svg class="icon-md"><use href="#i-tree"/></svg></button>
          <button title="Browser"><svg class="icon-md"><use href="#i-browser"/></svg></button>
        </div>
        <ul class="messages">
          <li>Il calcolo di&nbsp; proprietà di massa della parte 'CORNETTOCENTRALE' è 100% completo.</li>
          <li>Rigenerazione di CORNETTOCENTRALE completata: 3 feature o componenti soppressi.</li>
        </ul>
        <div class="selection">
          <div class="blank"></div>
          <div class="lights"><i></i><i class="on"></i><i></i></div>
          <button class="find" title="Trova"><svg class="icon-md"><use href="#i-find"/></svg></button>
          <output>1 selezionati</output>
          <div class="filter">
            <select aria-label="Filtro"><option>Feature</option></select>
            <i class="caret"></i>
          </div>
        </div>
      </footer>
    </main>

    <div class="behind">
      <div class="behind-title"></div>
      <div class="behind-menu">⋮</div>
      <div class="scrollbar">
        <svg viewBox="0 0 12 12"><path d="m3 8 3-4 3 4" fill="none" stroke="#555" stroke-width="2"/></svg>
        <div class="thumb"></div>
        <svg viewBox="0 0 12 12"><path d="m3 4 3 4 3-4" fill="none" stroke="#555" stroke-width="2"/></svg>
      </div>
    </div>
  </div>

  <div class="taskbar">
    <button class="start" title="Start"><svg class="icon-md"><use href="#i-win"/></svg></button>
    <div class="search">
      <span class="ring"></span>
      <input type="text" placeholder="Scrivi qui per eseguire la ricerca" aria-label="Ricerca">
      <svg class="icon"><use href="#i-mic"/></svg>
    </div>
    <button class="task" title="Giochi"><svg><use href="#i-splash"/></svg></button>
    <button class="task" title="Edge"><svg><use href="#i-edge"/></svg></button>
    <button class="task" title="Esplora file"><svg><use href="#i-explorer"/></svg></button>
    <button class="task" title="Store"><svg><use href="#i-store"/></svg></button>
    <button class="task" title="Webcam"><svg><use href="#i-webcam"/></svg></button>
    <button class="task" title="Outlook"><svg><use href="#i-outlook"/></svg></button>
    <button class="task open" title="Firefox"><svg><use href="#i-firefox"/></svg></button>
    <button class="task current" title="Creo"><svg><use href="#i-creo"/></svg></button>
    <div class="tray">
      <svg class="icon"><use href="#i-tray-up"/></svg>
      <svg class="icon"><use href="#i-battery"/></svg>
      <svg class="icon"><use href="#i-cloud"/></svg>
      <svg class="icon"><use href="#i-volume"/></svg>
      <div class="clock"><time>22:47</time><span>24/11/2017</span></div>
      <svg class="icon-md"><use href="#i-action"/></svg>
      <span class="show-desktop"></span>
    </div>
  </div>
</body>
</html>
```
FILE: styles.css
```css
* {
  margin: 0;
  padding: 0;
  box-sizing: border-box;
}

body {
  display: flex;
  flex-direction: column;
  height: 100vh;
  overflow: hidden;
  font-family: "Liberation Sans", Arial, sans-serif;
  font-size: 9px;
  color: #4a4a4a;
  background: #000;
}

button {
  font: inherit;
  color: inherit;
  background: none;
  border: none;
  white-space: nowrap;
}

ul {
  list-style: none;
}

svg {
  display: block;
  flex: none;
}

.sprite {
  position: absolute;
  width: 0;
  height: 0;
}

.icon {
  width: 14px;
  height: 14px;
}

.icon-xs {
  width: 10px;
  height: 10px;
}

.icon-sm {
  width: 12px;
  height: 12px;
}

.icon-md {
  width: 16px;
  height: 16px;
}

.caret {
  display: inline-block;
  flex: none;
  width: 6px;
  height: 4px;
  background: #444;
  clip-path: polygon(0 0, 100% 0, 50% 100%);
  vertical-align: 1px;
}

.caret.muted {
  background: #aaa;
}

.caret.barred {
  height: 6px;
  clip-path: polygon(0 0, 100% 0, 100% 1px, 0 1px, 0 2px, 100% 2px, 50% 100%, 0 2px);
}

.desktop {
  flex: 1;
  display: flex;
  min-height: 0;
}

/* Creo window */
.window {
  flex: 1;
  min-width: 0;
  display: flex;
  flex-direction: column;
  background: #fcfcfd;
  border: 3px solid #858585;
}

.titlebar {
  display: flex;
  align-items: center;
  height: 28px;
  padding: 0 8px 0 9px;
}

.quick-access {
  display: flex;
  align-items: center;
  gap: 6px;
}

.quick-access .app-icon {
  margin-right: -3px;
}

.quick-access .caret {
  width: 5px;
}

.quick-access .caret.barred {
  width: 7px;
}

.separator {
  width: 1px;
  height: 20px;
  background: #c6c6c6;
}

h1 {
  flex: 1;
  font-size: 10px;
  color: #222;
  text-align: center;
  white-space: nowrap;
}

.window-controls {
  display: flex;
  gap: 13px;
}

/* ribbon */
.tabs {
  display: flex;
  align-items: flex-end;
  height: 24px;
  padding: 0 3px 0 4px;
  border-bottom: 1px solid #c9cdd2;
}

.tab {
  height: 18px;
  padding: 0 9px 0 8px;
  font-size: 10px;
  font-weight: bold;
  color: #7b7d80;
  background: #eef0f2;
  border-top: 1px solid #c9cdd2;
  border-right: 1px solid #e0e3e6;
}

.tab.file {
  display: flex;
  align-items: center;
  gap: 3px;
  width: 36px;
  padding: 0 5px;
  margin-right: 7px;
  border: 1px solid #c9cdd2;
  border-bottom: none;
}

.tab.active {
  height: 21px;
  margin-bottom: -1px;
  color: #333;
  background: #fcfcfd;
  border: 1px solid #c9cdd2;
  border-bottom: none;
}

.tab.last {
  border-right-color: #c9cdd2;
}

.help-tools {
  display: flex;
  align-items: center;
  gap: 6px;
  height: 24px;
  margin-left: auto;
  padding: 0 2px 4px 0;
}

.ribbon {
  display: grid;
  grid-template-columns: 80px 134px 183px 141px 180px 240px 59px 78px 1fr;
  margin: 0 3px 0 4px;
  border-left: 1px solid #d5d8dc;
}

.group {
  display: flex;
  flex-direction: column;
  border-right: 1px solid #dcdfe2;
}

.tools {
  display: grid;
  height: 66px;
  padding: 2px 0 0 5px;
}

.ops {
  grid-template-columns: 46px 1fr;
  padding-left: 0;
}

.datum {
  grid-template-columns: 37px 108px 1fr;
  padding-left: 1px;
}

.shapes {
  grid-template-columns: 50px 1fr;
  padding-left: 3px;
}

.engineering {
  grid-template-columns: 101px 1fr;
}

.editing {
  grid-template-columns: 40px 61px 71px 1fr;
  padding-left: 4px;
}

.surfaces {
  grid-template-columns: 38px 1fr;
  padding-left: 0;
}

.intent {
  padding-left: 0;
}

.stack {
  display: grid;
  grid-template-rows: repeat(3, 20px);
}

.small {
  display: flex;
  align-items: center;
  gap: 3px;
}

.small .caret {
  margin-left: 4px;
}

.small:disabled {
  color: #b4b4b4;
}

.big {
  display: flex;
  flex-direction: column;
  align-items: center;
  padding-top: 4px;
  line-height: 12px;
}

.big svg {
  width: 25px;
  height: 25px;
  margin-bottom: 6px;
}

.big > .caret {
  margin-top: 2px;
}

.group-label {
  height: 19px;
  background: #edeff2;
  border-top: 1px solid #cdd1d5;
}

.group-label .caret {
  margin-left: 1px;
}

/* model tree */
.workspace {
  flex: 1;
  display: flex;
  min-height: 0;
  padding-right: 3px;
  border-top: 1px solid #b9bdc1;
}

.navigator {
  display: flex;
  flex-direction: column;
  width: 268px;
  padding: 11px 3px 10px 4px;
}

.nav-tabs {
  display: flex;
  height: 24px;
}

.nav-tabs button {
  width: 25px;
  padding: 0 4px;
  background: #eceef0;
  border: 1px solid #d3d6d9;
  border-left: none;
}

.nav-tabs .active {
  background: #fcfcfd;
  border-left: 1px solid #d3d6d9;
  border-bottom: none;
}

.nav-panel {
  flex: 1;
  border: 1px solid #cfcfd3;
  border-right-width: 2px;
  border-bottom-width: 2px;
}

.nav-header {
  display: flex;
  align-items: center;
  gap: 8px;
  height: 24px;
  padding: 0 4px 0 16px;
  border-bottom: 1px solid #c4c4c8;
}

.nav-header h2 {
  flex: 1;
  font-size: 10px;
  color: #555;
}

.nav-header button {
  display: flex;
  align-items: center;
  gap: 6px;
}

.tree {
  font-size: 10px;
  color: #6a6a6a;
}

.tree li {
  display: flex;
  align-items: center;
  gap: 2px;
  height: 15px;
  padding-left: 19px;
}

.tree .root {
  gap: 3px;
  padding-left: 3px;
}

.tree .branch {
  padding-left: 8px;
}

.tree .branch::before {
  content: '';
  width: 6px;
  height: 8px;
  margin-right: 3px;
  background: #8a8a8a;
  clip-path: polygon(0 0, 100% 50%, 0 100%);
}

.tree .selected span {
  margin-left: -1px;
  padding: 1px;
  color: #33586e;
  background: #abdcf5;
}

.tree .suppressed span::before {
  content: '';
  display: inline-block;
  width: 3px;
  height: 4px;
  margin-right: 2px;
  background: #444;
  vertical-align: 4px;
}

/* graphics area */
.viewport {
  flex: 1;
  position: relative;
  min-width: 0;
  background: linear-gradient(#1f2e38, #182f4b 40%, #0a2c66);
}

.model {
  width: 100%;
  height: 100%;
}

.view-toolbar {
  position: absolute;
  top: 6px;
  left: 50%;
  display: flex;
  padding: 0 4px;
  background: #e6eaf0;
  border: 1px solid #c9ced6;
  transform: translateX(-50%);
}

.view-toolbar button {
  position: relative;
  width: 26px;
  height: 24px;
  padding: 0 5px;
  background: #fff;
  border-right: 1px solid #d9dde2;
}

.view-toolbar svg {
  overflow: visible;
}

.view-toolbar .pressed {
  background: #e9e9e9;
  border: 1px solid #aaa;
  padding: 0 4px;
}

.view-toolbar .more::after {
  content: '';
  position: absolute;
  right: 2px;
  bottom: 2px;
  width: 4px;
  height: 4px;
  background: #333;
  clip-path: polygon(100% 0, 100% 100%, 0 100%);
}

.mode {
  position: absolute;
  left: 3px;
  bottom: 43px;
  font-size: 8px;
  color: #96703f;
}

/* status bar */
.statusbar {
  display: flex;
  height: 50px;
  padding: 0 14px 3px 5px;
  background: #eeeff1;
  border-top: 1px solid #8f9397;
}

.status-buttons {
  display: flex;
  align-items: flex-end;
  gap: 3px;
  padding-right: 7px;
}

.status-buttons button {
  width: 19px;
  height: 19px;
  padding: 0 1px;
  border: 1px solid #d0d3d6;
}

.status-buttons .pressed {
  background: #dfe5ee;
  border-color: #9aa1aa;
}

.messages {
  flex: 1;
  padding: 8px 0 0 6px;
  line-height: 13px;
  white-space: nowrap;
}

.messages li {
  display: flex;
  align-items: center;
  gap: 4px;
}

.messages li::before {
  content: '';
  width: 5px;
  height: 5px;
  border-radius: 50%;
  background: #1414c8;
}

.selection {
  align-self: flex-end;
  display: flex;
  align-items: center;
  height: 19px;
}

.blank {
  width: 30px;
  height: 19px;
  border-left: 1px solid #dcdee0;
}

.lights {
  display: flex;
  align-items: center;
  justify-content: center;
  gap: 2px;
  width: 27px;
  height: 19px;
  border-left: 1px solid #dcdee0;
  border-right: 1px solid #dcdee0;
}

.lights i {
  width: 4px;
  height: 4px;
  border-radius: 50%;
  background: #cfcfcf;
}

.lights .on {
  width: 10px;
  height: 10px;
  background: #fafa1e;
}

.find {
  width: 33px;
  height: 19px;
  margin: 0 5px 0 4px;
  padding: 0 8px;
  background: #f7f7f7;
  border: 1px solid #b8b8b8;
  border-radius: 2px;
}

.selection output {
  width: 78px;
}

.filter {
  display: flex;
  align-items: center;
  width: 129px;
  height: 18px;
  background: #f7f7f8;
  border: 1px solid #c4c7ca;
}

.filter select {
  appearance: none;
  flex: 1;
  height: 16px;
  padding-left: 4px;
  font: inherit;
  color: inherit;
  background: none;
  border: none;
  border-right: 1px solid #d4d6d8;
}

.filter .caret {
  margin: 0 3px;
}

/* browser window behind */
.behind {
  display: flex;
  flex-direction: column;
  width: 13px;
  background: #f0f0f0;
}

.behind-title {
  height: 28px;
  background: #1d1b42;
}

.behind-menu {
  height: 31px;
  line-height: 31px;
  background: #fafafa;
  border-bottom: 1px solid #ddd;
}

.scrollbar {
  flex: 1;
  display: flex;
  flex-direction: column;
  justify-content: space-between;
  padding: 2px 1px 0 0;
}

.scrollbar svg {
  width: 12px;
  height: 12px;
}

.thumb {
  height: 24%;
  margin-bottom: 96px;
  background: #cbcbcb;
}

/* taskbar */
.taskbar {
  display: flex;
  height: 34px;
  font-family: "Open Sans", "Noto Sans", sans-serif;
  color: #eee;
  background: linear-gradient(90deg, #050505, #101212 45%, #060a0a);
}

.start {
  width: 40px;
  padding: 0 12px;
}

.search {
  display: flex;
  align-items: center;
  width: 287px;
  margin-right: 1px;
  padding: 0 10px 0 8px;
  background: #333435;
}

.ring {
  width: 18px;
  height: 18px;
  border: 3px solid #eee;
  border-radius: 50%;
}

.search input {
  flex: 1;
  min-width: 0;
  padding-left: 7px;
  font-family: inherit;
  font-size: 12px;
  color: #eee;
  background: none;
  border: none;
}

.search input::placeholder {
  color: #a8a8a8;
}

.task {
  width: 41px;
  padding: 2px 11px 0;
  border-bottom: 2px solid transparent;
}

.task svg {
  width: 19px;
  height: 19px;
}

.task.open {
  border-bottom-color: #9fc0e8;
}

.task.current {
  padding: 2px 9px 0;
  background: #4b8450;
  border-bottom-color: #3ee23e;
}

.task.current svg {
  width: 22px;
  height: 22px;
}

.tray {
  display: flex;
  align-items: center;
  gap: 6px;
  margin-left: auto;
}

.clock {
  display: flex;
  flex-direction: column;
  align-items: center;
  width: 60px;
  margin-right: 2px;
  line-height: 15px;
}

.show-desktop {
  width: 5px;
  height: 34px;
  margin-left: 9px;
  border-left: 1px solid #444;
}
```
